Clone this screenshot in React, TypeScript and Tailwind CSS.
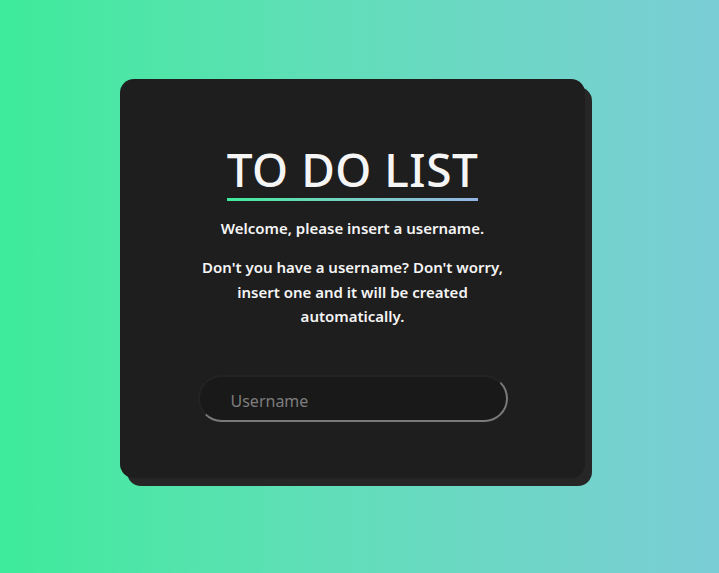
export default function App() {
  return (
    <div
      className="min-h-screen w-full bg-gradient-to-r from-[#3deb9b] to-[#7bcdd6] pt-[79px] pl-[120px]"
      style={{ fontFamily: '"Noto Sans", "Open Sans", sans-serif' }}
    >
      <div className="w-[465px] h-[399px] bg-[#1e1e1e] rounded-[14px] shadow-[7px_8px_0_#262626] flex flex-col items-center text-center text-[#f5f5f5]">
        <h1 className="mt-[61px] text-[46px] leading-[58px] font-medium tracking-[0.5px] pb-[3px] relative">
          TO DO LIST
          <span className="absolute left-0 right-0 bottom-0 h-[3px] bg-gradient-to-r from-[#3deb9b] to-[#93b4e3]" />
        </h1>
        <p className="mt-[16px] text-[15px] font-semibold leading-[22px]">
          Welcome, please insert a username.
        </p>
        <p className="mt-[16px] w-[320px] text-[15px] font-semibold leading-[24.5px]">
          Don't you have a username? Don't worry, insert one and it will be created automatically.
        </p>
        <input
          placeholder="Username"
          className="mt-[46px] w-[310px] h-[47px] shrink-0 rounded-full bg-[#191919] border-2 border-t-[#232323] border-l-[#232323] border-r-[#7a7a7a] border-b-[#7a7a7a] pl-[31px] pr-[31px] pt-[5px] text-[16px] text-white placeholder:text-[#7d7d7d] outline-none"
        />
      </div>
    </div>
  )
}
